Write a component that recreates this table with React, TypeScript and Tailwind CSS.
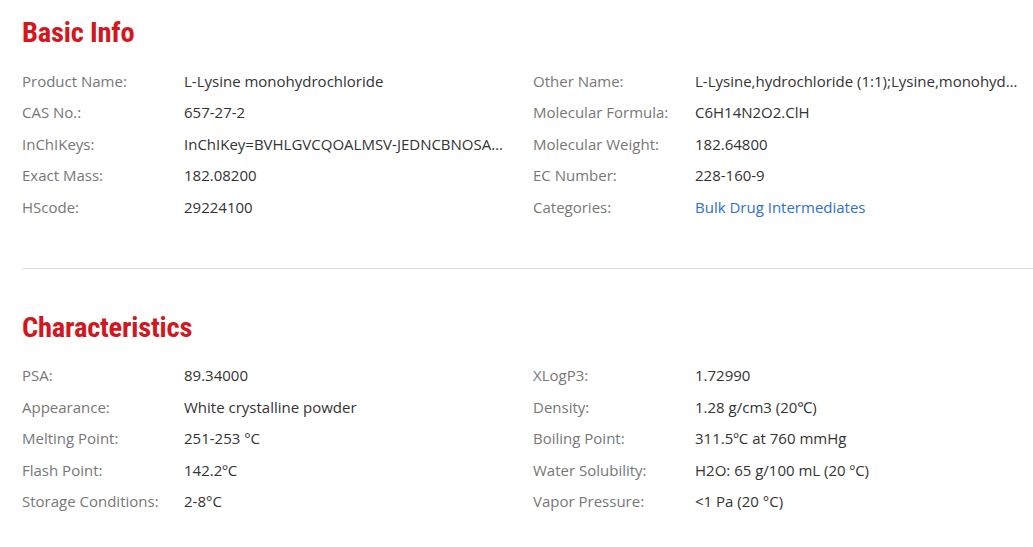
const basicInfo: [string, string, boolean?][][] = [
  [
    ['Product Name:', 'L-Lysine monohydrochloride'],
    ['CAS No.:', '657-27-2'],
    ['InChIKeys:', 'InChIKey=BVHLGVCQOALMSV-JEDNCBNOSA-N'],
    ['Exact Mass:', '182.08200'],
    ['HScode:', '29224100'],
  ],
  [
    ['Other Name:', 'L-Lysine,hydrochloride (1:1);Lysine,monohydrochloride, L-'],
    ['Molecular Formula:', 'C6H14N2O2.ClH'],
    ['Molecular Weight:', '182.64800'],
    ['EC Number:', '228-160-9'],
    ['Categories:', 'Bulk Drug Intermediates', true],
  ],
];

const characteristics: [string, string, boolean?][][] = [
  [
    ['PSA:', '89.34000'],
    ['Appearance:', 'White crystalline powder'],
    ['Melting Point:', '251-253 °C'],
    ['Flash Point:', '142.2ºC'],
    ['Storage Conditions:', '2-8°C'],
  ],
  [
    ['XLogP3:', '1.72990'],
    ['Density:', '1.28 g/cm3 (20℃)'],
    ['Boiling Point:', '311.5ºC at 760 mmHg'],
    ['Water Solubility:', 'H2O: 65 g/100 mL (20 ºC)'],
    ['Vapor Pressure:', '<1 Pa (20 °C)'],
  ],
];

function Column({ rows, valueWidth }: { rows: [string, string, boolean?][]; valueWidth: string }) {
  return (
    <div>
      {rows.map(([label, value, link]) => (
        <div key={label} className="flex h-[31.5px] items-center">
          <div className="w-[162px] shrink-0 text-[#777]">{label}</div>
          <div className={`${valueWidth} truncate ${link ? 'text-[#2d6fd6]' : 'text-[#333]'}`}>{value}</div>
        </div>
      ))}
    </div>
  );
}

function Section({ title, data }: { title: string; data: [string, string, boolean?][][] }) {
  return (
    <div>
      <h2 className="text-[28.5px] leading-[34px] font-bold text-[#d2171e] tracking-[-0.2px] [font-family:'Liberation_Sans_Narrow','Roboto_Condensed','Liberation_Sans',sans-serif]">
        {title}
      </h2>
      <div className="mt-[15px] grid grid-cols-[511px_1fr]">
        <Column rows={data[0]} valueWidth="w-[319px]" />
        <Column rows={data[1]} valueWidth="w-[324px]" />
      </div>
    </div>
  );
}

export default function App() {
  return (
    <div className="min-h-[547px] bg-white pl-[22px] pt-[16px] text-[15px] [font-family:'Open_Sans','Noto_Sans',sans-serif]">
      <Section title="Basic Info" data={basicInfo} />
      <div className="mt-[45px] border-t border-[#dddddd]" />
      <div className="pt-[42px]">
        <Section title="Characteristics" data={characteristics} />
      </div>
    </div>
  );
}
